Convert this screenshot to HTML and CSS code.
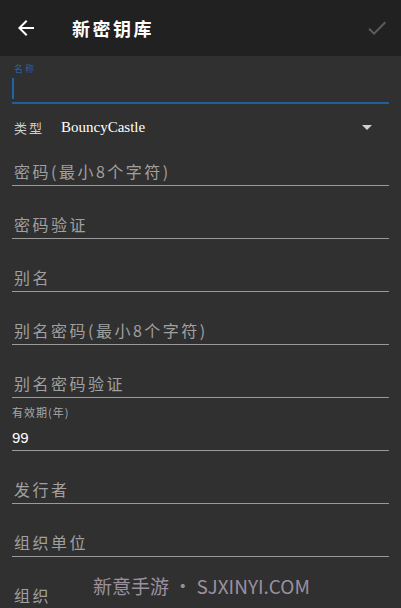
FILE: index.html
```html
<!DOCTYPE html>
<html lang="zh">
<head>
<meta charset="utf-8">
<link rel="stylesheet" href="styles.css">
</head>
<body>
<header class="bar">
  <svg class="back" width="24" height="24" viewBox="0 0 24 24"><path d="M20 11H7.83l5.59-5.59L12 4l-8 8 8 8 1.41-1.41L7.83 13H20v-2z" fill="#fff"/></svg>
  <h1 class="title">新密钥库</h1>
  <svg class="check" width="24" height="24" viewBox="0 0 24 24"><path d="M9 16.17L4.83 12l-1.42 1.41L9 19 21 7l-1.41-1.41z" fill="#5c5c5c"/></svg>
</header>
<main class="form">
  <div class="name-field">
    <div class="tiny">名称</div>
    <div class="name-input"><span class="cursor"></span></div>
  </div>
  <div class="type-row">
    <span class="type-label">类型</span>
    <span class="type-value">BouncyCastle</span>
    <span class="caret"></span>
  </div>
  <div class="field first"><span class="ph">密码(最小8个字符)</span></div>
  <div class="field"><span class="ph">密码验证</span></div>
  <div class="field"><span class="ph">别名</span></div>
  <div class="field"><span class="ph">别名密码(最小8个字符)</span></div>
  <div class="field"><span class="ph">别名密码验证</span></div>
  <div class="field filled">
    <span class="small-label">有效期(年)</span>
    <span class="value">99</span>
  </div>
  <div class="field"><span class="ph">发行者</span></div>
  <div class="field"><span class="ph">组织单位</span></div>
  <div class="field"><span class="ph">组织</span></div>
</main>
<div class="watermark">新意手游 • SJXINYI.COM</div>
</body>
</html>
```
FILE: styles.css
```css
html, body {
  margin: 0;
  padding: 0;
}
body {
  width: 401px;
  height: 608px;
  overflow: hidden;
  background: #303030;
  font-family: "Noto Sans CJK SC", "Noto Sans", sans-serif;
  color: #fff;
  position: relative;
}
.bar {
  height: 56px;
  background: #212121;
  display: flex;
  align-items: center;
  padding: 0 12px 0 14px;
  box-sizing: border-box;
}
.back {
  flex: none;
  margin-right: 34px;
}
.title {
  margin: 0;
  flex: 1;
  font-size: 18px;
  font-weight: bold;
  letter-spacing: 2.5px;
  line-height: 24px;
}
.check {
  flex: none;
}
.form {
  padding: 0 12px;
}
.name-field {
  height: 48px;
  padding-top: 7px;
  box-sizing: border-box;
  display: flex;
  flex-direction: column;
}
.tiny {
  font-size: 9px;
  line-height: 12px;
  letter-spacing: 2px;
  color: #1e64a8;
  padding-left: 2px;
}
.name-input {
  flex: 1;
  border-bottom: 2px solid #1e5f9f;
  display: flex;
  align-items: flex-end;
  padding-bottom: 3px;
}
.cursor {
  display: block;
  width: 2px;
  height: 21px;
  background: #1e64a8;
}
.type-row {
  height: 46px;
  display: flex;
  align-items: center;
  padding: 0 2px;
  box-sizing: border-box;
}
.type-label {
  font-size: 13px;
  letter-spacing: 2px;
  color: #cfcfcf;
  width: 47px;
}
.type-value {
  flex: 1;
  font-family: "Liberation Serif", serif;
  font-size: 15px;
  color: #fff;
}
.caret {
  width: 0;
  height: 0;
  border-left: 5px solid transparent;
  border-right: 5px solid transparent;
  border-top: 5px solid #d0d0d0;
  margin-right: 15px;
}
.field {
  height: 53px;
  box-sizing: border-box;
  border-bottom: 1px solid #9a9a9a;
  display: flex;
  align-items: flex-end;
  padding: 0 2px 4px;
}
.field.first {
  height: 36px;
}
.ph {
  font-size: 16px;
  line-height: 20px;
  color: #a0a0a0;
  letter-spacing: 2.5px;
}
.field.filled {
  flex-direction: column;
  align-items: flex-start;
  justify-content: flex-end;
  padding: 0 0 2px;
}
.small-label {
  font-size: 11px;
  line-height: 14px;
  letter-spacing: 1px;
  color: #a8a8a8;
  margin-bottom: 9px;
}
.value {
  font-family: "Liberation Sans", sans-serif;
  font-size: 15px;
  line-height: 20px;
  color: #fff;
}
.watermark {
  position: absolute;
  left: 93px;
  top: 572px;
  font-size: 19px;
  line-height: 28px;
  color: #9c90a0;
  white-space: nowrap;
}
```
